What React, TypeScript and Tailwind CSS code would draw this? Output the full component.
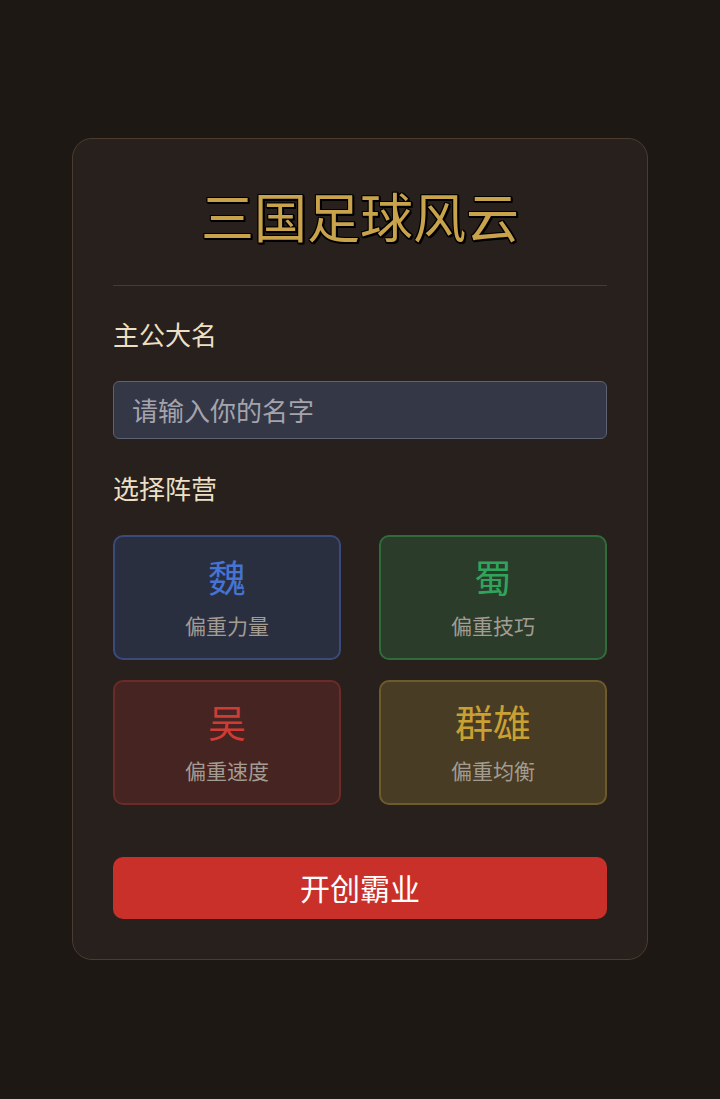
const factions = [
  {
    name: '魏',
    desc: '偏重力量',
    box: 'bg-[#2a2f40] border-[#3b4a7c]',
    text: 'text-[#4574d4]',
  },
  {
    name: '蜀',
    desc: '偏重技巧',
    box: 'bg-[#2b3c2b] border-[#2f6b3b]',
    text: 'text-[#2fa45a]',
  },
  {
    name: '吴',
    desc: '偏重速度',
    box: 'bg-[#462421] border-[#6c2b27]',
    text: 'text-[#cf3b35]',
  },
  {
    name: '群雄',
    desc: '偏重均衡',
    box: 'bg-[#493c25] border-[#6e5b2c]',
    text: 'text-[#c9a133]',
  },
];

export default function App() {
  return (
    <div
      className="min-h-[1099px] bg-[#1e1815] flex justify-center pt-[138px]"
      style={{ fontFamily: '"Noto Sans CJK SC", "Noto Sans", sans-serif' }}
    >
      <div className="w-[576px] h-[822px] rounded-[20px] border border-[#4a3d2f] bg-[#27201c] px-10 pt-10 pb-10 flex flex-col">
        <h1 className="text-center text-[53px] leading-[72px] text-[#c9a24c] [text-shadow:2px_2px_0_#000,-1px_-1px_0_#000,1px_-1px_0_#000,-1px_1px_0_#000,1px_1px_0_#000,2px_0_0_#000,0_2px_0_#000]">
          三国足球风云
        </h1>
        <div className="mt-[34px] h-px bg-[#4a3c2c]" />

        <label className="mt-7 text-[26px] leading-[39px] text-[#ecdfc4]">主公大名</label>
        <input
          className="mt-7 h-[58px] w-full rounded-md border border-[#5d6174] bg-[#343746] px-[18px] text-[26px] text-[#e0e0e0] placeholder:text-[#a4a4ac] outline-none"
          placeholder="请输入你的名字"
        />

        <label className="mt-[29px] text-[26px] leading-[39px] text-[#ecdfc4]">选择阵营</label>
        <div className="mt-7 grid grid-cols-2 gap-x-[38px] gap-y-5">
          {factions.map((f) => (
            <button
              key={f.name}
              className={`h-[125px] rounded-[10px] border-2 flex flex-col items-center justify-center pb-[2px] ${f.box}`}
            >
              <span className={`text-[38px] leading-[48px] ${f.text}`}>{f.name}</span>
              <span className="mt-[10px] text-[21px] leading-[31px] text-[#a39c92]">{f.desc}</span>
            </button>
          ))}
        </div>

        <button className="mt-[52px] h-[63px] w-full rounded-[10px] bg-[#c9302a] text-[30px] text-white">
          开创霸业
        </button>
      </div>
    </div>
  );
}
